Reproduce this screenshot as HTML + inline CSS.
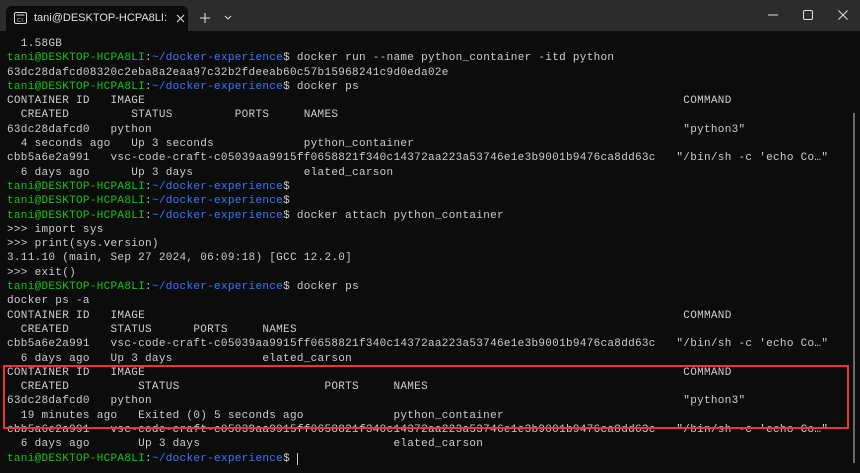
<!DOCTYPE html>
<html><head><meta charset="utf-8"><style>
html,body{margin:0;padding:0;width:860px;height:473px;overflow:hidden;background:#0c0c0c}
.bar{position:absolute;left:0;top:0;width:860px;height:31px;background:#2c2c2c}
.tab{position:absolute;left:6px;top:6px;width:182px;height:25px;background:#0c0c0c;border-radius:6px 6px 0 0;color:#e0e0e0;font:11px "Liberation Sans",sans-serif}
.tab span{position:absolute;left:28px;top:6px;width:136px;overflow:hidden;white-space:nowrap}
pre{position:absolute;left:7px;top:37px;margin:0;font:11px/14.3px "Liberation Mono",monospace;letter-spacing:0.3px;color:#cccccc;white-space:pre}
.g{color:#16c60c}.b{color:#3b78ff}
.box{position:absolute;left:3px;top:365px;width:842px;height:60px;border:2px solid #e8343a}
.sb{position:absolute;left:853px;top:113px;width:2px;height:350px;background:#6a6a6a}
</style></head><body>
<div class="bar">
<div class="tab">
<svg style="position:absolute;left:8px;top:6px" width="13" height="12" viewBox="0 0 13 12"><rect x="0.5" y="0.5" width="12" height="11" rx="1.5" fill="none" stroke="#ddd"/><path d="M2.5 3h8" stroke="#ddd"/><text x="3" y="10" font-size="5" fill="#ddd" font-family="Liberation Sans">C:\</text></svg>
<span>tani@DESKTOP-HCPA8LI: ~/d</span>
<svg style="position:absolute;left:170px;top:8px" width="9" height="9"><path d="M1 1L8 8M8 1L1 8" stroke="#ddd" stroke-width="1.1"/></svg>
</div>
<svg style="position:absolute;left:200px;top:13px" width="10" height="10"><path d="M5 0V10M0 5H10" stroke="#ddd" stroke-width="1.1"/></svg>
<svg style="position:absolute;left:224px;top:15px" width="8" height="6"><path d="M1 1L4 4L7 1" stroke="#ddd" fill="none"/></svg>
<svg style="position:absolute;left:768px;top:14px" width="10" height="2"><path d="M0 1H10" stroke="#ddd"/></svg>
<svg style="position:absolute;left:803px;top:10px" width="10" height="10"><rect x="0.5" y="0.5" width="9" height="9" rx="1.5" fill="none" stroke="#ddd"/></svg>
<svg style="position:absolute;left:838px;top:10px" width="10" height="10"><path d="M0.5 0.5L9.5 9.5M9.5 0.5L0.5 9.5" stroke="#ddd" stroke-width="1.1"/></svg>
</div>
<pre>  1.58GB
<span class="g">tani@DESKTOP-HCPA8LI</span>:<span class="b">~/docker-experience</span>$ docker run --name python_container -itd python
63dc28dafcd08320c2eba8a2eaa97c32b2fdeeab60c57b15968241c9d0eda02e
<span class="g">tani@DESKTOP-HCPA8LI</span>:<span class="b">~/docker-experience</span>$ docker ps
CONTAINER ID   IMAGE                                                                              COMMAND
  CREATED         STATUS         PORTS     NAMES
63dc28dafcd0   python                                                                             "python3"
  4 seconds ago   Up 3 seconds             python_container
cbb5a6e2a991   vsc-code-craft-c05039aa9915ff0658821f340c14372aa223a53746e1e3b9001b9476ca8dd63c   "/bin/sh -c 'echo Co…"
  6 days ago      Up 3 days                elated_carson
<span class="g">tani@DESKTOP-HCPA8LI</span>:<span class="b">~/docker-experience</span>$
<span class="g">tani@DESKTOP-HCPA8LI</span>:<span class="b">~/docker-experience</span>$
<span class="g">tani@DESKTOP-HCPA8LI</span>:<span class="b">~/docker-experience</span>$ docker attach python_container
&gt;&gt;&gt; import sys
&gt;&gt;&gt; print(sys.version)
3.11.10 (main, Sep 27 2024, 06:09:18) [GCC 12.2.0]
&gt;&gt;&gt; exit()
<span class="g">tani@DESKTOP-HCPA8LI</span>:<span class="b">~/docker-experience</span>$ docker ps
docker ps -a
CONTAINER ID   IMAGE                                                                              COMMAND
  CREATED      STATUS      PORTS     NAMES
cbb5a6e2a991   vsc-code-craft-c05039aa9915ff0658821f340c14372aa223a53746e1e3b9001b9476ca8dd63c   "/bin/sh -c 'echo Co…"
  6 days ago   Up 3 days             elated_carson
CONTAINER ID   IMAGE                                                                              COMMAND
  CREATED          STATUS                     PORTS     NAMES
63dc28dafcd0   python                                                                             "python3"
  19 minutes ago   Exited (0) 5 seconds ago             python_container
cbb5a6e2a991   vsc-code-craft-c05039aa9915ff0658821f340c14372aa223a53746e1e3b9001b9476ca8dd63c   "/bin/sh -c 'echo Co…"
  6 days ago       Up 3 days                            elated_carson
<span class="g">tani@DESKTOP-HCPA8LI</span>:<span class="b">~/docker-experience</span>$ <span style="border-left:1px solid #ccc"> </span></pre>
<div class="box"></div>
<div class="sb"></div>
</body></html>
